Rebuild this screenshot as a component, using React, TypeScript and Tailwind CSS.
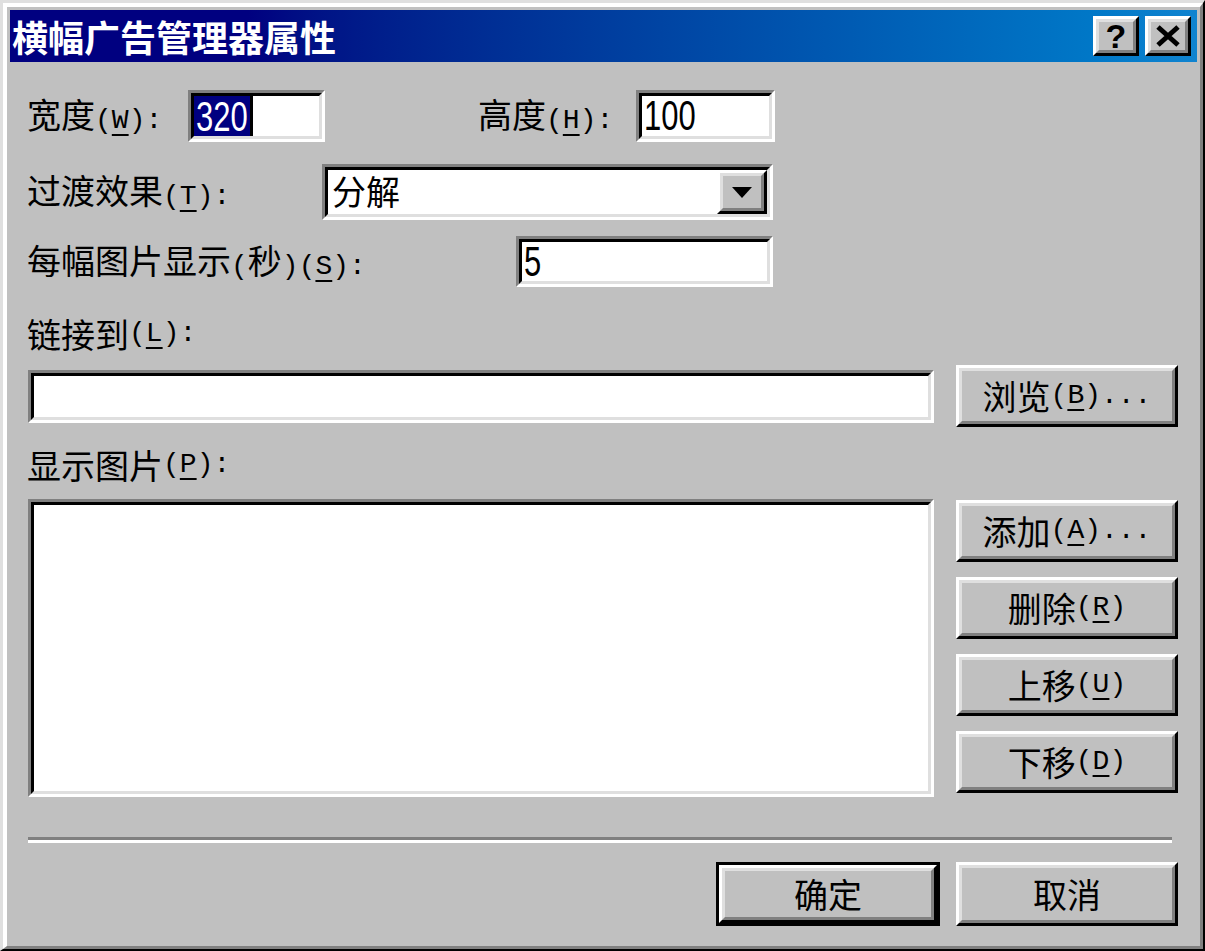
import React from 'react';

const cjk = "font-['Noto_Sans_CJK_SC','Noto_Sans_CJK_JP',sans-serif]";
const mono = "font-['Liberation_Mono',monospace]";

function Zh({ children }: { children: React.ReactNode }) {
  return <span className={`${cjk} text-[34px] leading-none`}>{children}</span>;
}

function Lt({ children }: { children: React.ReactNode }) {
  return <span className={`${mono} text-[28px] leading-none`}>{children}</span>;
}

// mnemonic: (X) with the letter underlined
function Mn({ c }: { c: string }) {
  return (
    <span className={`${mono} text-[28px] leading-none`}>
      (<span className="underline decoration-2 underline-offset-[6px]">{c}</span>)
    </span>
  );
}

function Sunken({ className = '', children }: { className?: string; children?: React.ReactNode }) {
  return (
    <div
      className={`border-[3px] border-t-[#808080] border-l-[#808080] border-r-white border-b-white ${className}`}
    >
      <div className="flex h-full w-full items-center border-[3px] border-t-black border-l-black border-r-[#dfdfdf] border-b-[#dfdfdf] bg-white">
        {children}
      </div>
    </div>
  );
}

function Raised({ className = '', children }: { className?: string; children?: React.ReactNode }) {
  return (
    <div
      className={`border-[3px] border-t-white border-l-white border-r-black border-b-black ${className}`}
    >
      <div className="flex h-full w-full items-center justify-center border-[3px] border-t-[#dfdfdf] border-l-[#dfdfdf] border-r-[#808080] border-b-[#808080] bg-[#c0c0c0] text-black">
        {children}
      </div>
    </div>
  );
}

function Digits({ children }: { children: React.ReactNode }) {
  return (
    <span className="inline-block origin-center scale-y-[1.35] font-['Liberation_Sans',sans-serif] text-[31px] leading-none">
      {children}
    </span>
  );
}

export default function App() {
  return (
    <div className="h-[951px] w-[1205px] select-none border-t-[3px] border-l-[3px] border-r-[2px] border-b-[2px] border-t-[#dfdfdf] border-l-[#dfdfdf] border-r-black border-b-black bg-[#c0c0c0] text-black">
      <div className="flex h-full flex-col border-t-[4px] border-l-[4px] border-r-[3px] border-b-[3px] border-t-white border-l-white border-r-[#808080] border-b-[#808080] p-[3px]">
        {/* title bar */}
        <div className="flex h-[52px] shrink-0 items-center justify-between bg-linear-to-r from-[#000080] from-20% to-[#1084d0] pl-[2px] pr-[6px]">
          <span className={`${cjk} text-[36px] font-bold leading-none text-white`}>横幅广告管理器属性</span>
          <div className="flex gap-[6px]">
            <Raised className="h-[40px] w-[46px]">
              <span className="font-['Liberation_Sans',sans-serif] text-[34px] font-bold leading-none">?</span>
            </Raised>
            <Raised className="h-[40px] w-[46px]">
              <svg width="26" height="22" viewBox="0 0 26 22">
                <path d="M3 2 L23 20 M23 2 L3 20" stroke="black" strokeWidth="5" />
              </svg>
            </Raised>
          </div>
        </div>

        {/* body */}
        <div className="flex flex-col pl-[17px] pr-[19px]">
          <div className="mt-[28px] flex h-[52px] items-center">
            <div className="w-[161px]">
              <Zh>宽度</Zh>
              <Mn c="W" />
              <Lt>:</Lt>
            </div>
            <Sunken className="h-[52px] w-[137px]">
              <span className="flex h-full items-center bg-[#000080] px-[2px] text-white">
                <Digits>320</Digits>
              </span>
              <span className="h-full w-[3px] bg-black" />
            </Sunken>
            <div className="ml-[153px] w-[158px]">
              <Zh>高度</Zh>
              <Mn c="H" />
              <Lt>:</Lt>
            </div>
            <Sunken className="h-[52px] w-[139px]">
              <span className="pl-[2px]">
                <Digits>100</Digits>
              </span>
            </Sunken>
          </div>

          <div className="mt-[22px] flex h-[56px] items-center">
            <div className="w-[295px]">
              <Zh>过渡效果</Zh>
              <Mn c="T" />
              <Lt>:</Lt>
            </div>
            <Sunken className="h-[56px] w-[451px]">
              <span className="flex-1 pl-[4px]">
                <Zh>分解</Zh>
              </span>
              <Raised className="h-full w-[50px]">
                <svg width="20" height="11" viewBox="0 0 20 11">
                  <path d="M0 0 H20 L10 11 Z" fill="black" />
                </svg>
              </Raised>
            </Sunken>
          </div>

          <div className="mt-[16px] flex h-[51px] items-center">
            <div className="w-[489px]">
              <Zh>每幅图片显示</Zh>
              <Lt>(</Lt>
              <Zh>秒</Zh>
              <Lt>)</Lt>
              <Mn c="S" />
              <Lt>:</Lt>
            </div>
            <Sunken className="h-[51px] w-[257px]">
              <span className="pl-[2px]">
                <Digits>5</Digits>
              </span>
            </Sunken>
          </div>

          <div className="mt-[25px] flex h-[44px] items-center">
            <Zh>链接到</Zh>
            <Mn c="L" />
            <Lt>:</Lt>
          </div>

          <div className="mt-[9px] flex h-[62px] items-center">
            <Sunken className="ml-[1px] h-[53px] w-[906px]" />
            <Raised className="ml-[22px] h-[62px] w-[222px]">
              <Zh>浏览</Zh>
              <Mn c="B" />
              <Lt>...</Lt>
            </Raised>
          </div>

          <div className="mt-[16px] flex h-[44px] items-center">
            <Zh>显示图片</Zh>
            <Mn c="P" />
            <Lt>:</Lt>
          </div>

          <div className="mt-[12px] flex">
            <Sunken className="ml-[1px] h-[298px] w-[906px]" />
            <div className="ml-[22px] mt-[1px] flex flex-col gap-[15px]">
              <Raised className="h-[62px] w-[222px]">
                <Zh>添加</Zh>
                <Mn c="A" />
                <Lt>...</Lt>
              </Raised>
              <Raised className="h-[62px] w-[222px]">
                <Zh>删除</Zh>
                <Mn c="R" />
              </Raised>
              <Raised className="h-[62px] w-[222px]">
                <Zh>上移</Zh>
                <Mn c="U" />
              </Raised>
              <Raised className="h-[62px] w-[222px]">
                <Zh>下移</Zh>
                <Mn c="D" />
              </Raised>
            </div>
          </div>

          <div className="ml-[1px] mr-[6px] mt-[40px] h-[6px] border-t-[3px] border-b-[3px] border-t-[#808080] border-b-white" />

          <div className="mt-[19px] flex h-[64px] justify-end gap-[16px]">
            <div className="h-[64px] w-[224px] border-[3px] border-black">
              <Raised className="h-full w-full">
                <Zh>确定</Zh>
              </Raised>
            </div>
            <Raised className="h-[64px] w-[222px]">
              <Zh>取消</Zh>
            </Raised>
          </div>
        </div>
      </div>
    </div>
  );
}
